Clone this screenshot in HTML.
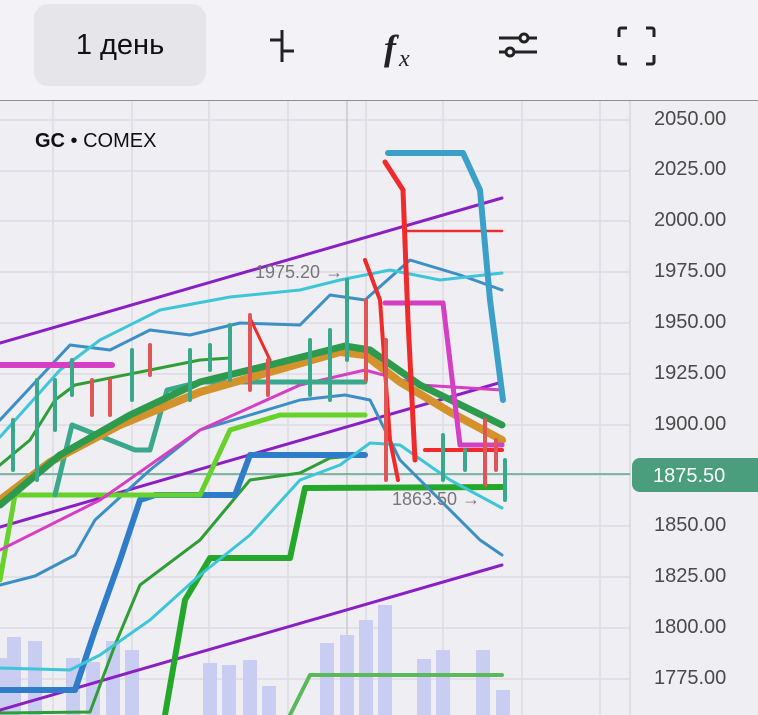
<!DOCTYPE html>
<html><head><meta charset="utf-8"><style>
html,body{margin:0;padding:0;width:758px;height:715px;overflow:hidden;background:#efeef3;font-family:"Liberation Sans",sans-serif}
.top{position:absolute;left:0;top:0;width:758px;height:100px;background:#f3f2f7;border-bottom:1.5px solid #8e8e93}
.btn{position:absolute;left:34px;top:4px;width:172px;height:82px;background:#e6e5ea;border-radius:14px;font-size:29px;color:#111;line-height:82px;text-align:center}
.lab{position:absolute;left:654px;font-size:20px;color:#4a4a4a}
</style></head><body>
<div class="top">
<div class="btn">1 день</div>
<svg width="758" height="100" style="position:absolute;left:0;top:0">
<g stroke="#222" stroke-width="3" fill="none">
<line x1="282" y1="30" x2="282" y2="62"/><line x1="270" y1="40" x2="282" y2="40"/><line x1="282" y1="51" x2="294" y2="51"/>
<line x1="499" y1="38" x2="537" y2="38"/><line x1="499" y1="52" x2="537" y2="52"/>
<circle cx="524" cy="38" r="4" fill="#f3f2f7"/><circle cx="510" cy="52" r="4" fill="#f3f2f7"/>
<path d="M619 37v-7a2 2 0 0 1 2-2h6M646 28h6a2 2 0 0 1 2 2v7M654 55v7a2 2 0 0 1-2 2h-6M627 64h-6a2 2 0 0 1-2-2v-7" stroke-width="3"/>
</g>
<text x="384" y="60" font-family="Liberation Serif" font-style="italic" font-weight="bold" font-size="36" fill="#222">f</text>
<text x="399" y="66" font-family="Liberation Serif" font-style="italic" font-size="24" fill="#222">x</text>
</svg>
</div>
<svg width="758" height="614" viewBox="0 101 758 614" style="position:absolute;left:0;top:101px">
<g stroke="#dddce2" stroke-width="1.5">
<line x1="53" y1="101" x2="53" y2="715"/><line x1="132" y1="101" x2="132" y2="715"/><line x1="209" y1="101" x2="209" y2="715"/><line x1="288" y1="101" x2="288" y2="715"/><line x1="366" y1="101" x2="366" y2="715"/><line x1="443" y1="101" x2="443" y2="715"/><line x1="522" y1="101" x2="522" y2="715"/><line x1="600" y1="101" x2="600" y2="715"/>
<line x1="0" y1="120" x2="630" y2="120"/><line x1="0" y1="171" x2="630" y2="171"/><line x1="0" y1="221" x2="630" y2="221"/><line x1="0" y1="272" x2="630" y2="272"/><line x1="0" y1="323" x2="630" y2="323"/><line x1="0" y1="374" x2="630" y2="374"/><line x1="0" y1="425" x2="630" y2="425"/><line x1="0" y1="475" x2="630" y2="475"/><line x1="0" y1="526" x2="630" y2="526"/><line x1="0" y1="577" x2="630" y2="577"/><line x1="0" y1="628" x2="630" y2="628"/><line x1="0" y1="679" x2="630" y2="679"/>
</g>
<line x1="347" y1="101" x2="347" y2="715" stroke="#c9c8ce" stroke-width="1.5"/>
<line x1="630" y1="101" x2="630" y2="715" stroke="#d6d5db" stroke-width="1.5"/>
<g fill="#c9cdf2">
<rect x="0" y="658" width="14" height="57"/><rect x="7" y="637" width="14" height="78"/><rect x="28" y="641" width="14" height="74"/><rect x="66" y="658" width="14" height="57"/><rect x="86" y="662" width="14" height="53"/><rect x="106" y="641" width="14" height="74"/><rect x="125" y="650" width="14" height="65"/><rect x="203" y="663" width="14" height="52"/><rect x="222" y="665" width="14" height="50"/><rect x="243" y="660" width="14" height="55"/><rect x="262" y="686" width="14" height="29"/><rect x="320" y="643" width="14" height="72"/><rect x="340" y="635" width="14" height="80"/><rect x="359" y="620" width="14" height="95"/><rect x="378" y="605" width="14" height="110"/><rect x="417" y="659" width="14" height="56"/><rect x="436" y="650" width="14" height="65"/><rect x="476" y="650" width="14" height="65"/><rect x="496" y="690" width="14" height="25"/>
</g>
<line x1="0" y1="474" x2="630" y2="474" stroke="#5aa88a" stroke-width="1.5"/>
<g fill="none" stroke-linejoin="round" stroke-linecap="round">
<polyline stroke="#8a1fc4" stroke-width="3" points="0,343 502,198"/>
<polyline stroke="#8a1fc4" stroke-width="3" points="0,527 502,382"/>
<polyline stroke="#8a1fc4" stroke-width="3" points="0,710 502,565"/>
<polyline stroke="#5cb85c" stroke-width="4" points="290,715 310,675 502,675"/>
<polyline stroke="#2f9e35" stroke-width="3" points="0,713 90,712 115,645 140,585 200,540 250,480 300,473 330,458 365,455"/>
<polyline stroke="#24a82a" stroke-width="6" points="165,715 185,600 210,558 290,558 305,488 502,487"/>
<polyline stroke="#2f7cc8" stroke-width="6" points="0,690 75,690 95,630 120,560 140,500 155,495 235,495 250,455 365,455"/>
<polyline stroke="#3cc6d8" stroke-width="3" points="0,668 70,670 100,655 150,620 200,575 250,535 300,480 340,465 370,443 400,445 450,480 502,508"/>
<polyline stroke="#3b8fc4" stroke-width="3" points="0,585 35,576 75,555 95,520 150,470 200,430 250,415 300,400 345,395 370,400 400,460 440,500 480,540 502,555"/>
<polyline stroke="#66d22a" stroke-width="5" points="0,580 15,495 200,495 230,430 280,415 365,415"/>
<polyline stroke="#d63ec4" stroke-width="3" points="0,550 100,500 200,430 300,385 365,370 420,385 502,390"/>
<polyline stroke="#3aa88a" stroke-width="5" points="55,495 72,425 135,450 150,450 167,390 200,382 365,382"/>
<polyline stroke="#3b8fc4" stroke-width="3" points="0,420 70,345 110,350 150,330 190,335 240,323 300,325 330,295 365,300 410,260 460,275 502,290"/>
<polyline stroke="#3cc6d8" stroke-width="3" points="0,437 60,370 100,340 160,310 230,297 300,290 340,280 390,270 440,280 502,273"/>
<polyline stroke="#d4922a" stroke-width="8" points="0,500 50,462 120,425 200,392 270,372 340,352 365,355 400,382 450,412 502,440"/>
<polyline stroke="#2e9a4e" stroke-width="7" points="0,505 60,455 130,415 200,382 270,365 345,346 370,350 420,385 502,425"/>
<polyline stroke="#2f9e35" stroke-width="3" points="0,465 30,440 55,400 75,385 150,370 200,360 230,358"/>
<polyline stroke="#d63ec4" stroke-width="5" points="385,303 443,303 460,445 502,445"/>
<polyline stroke="#d63ec4" stroke-width="6" points="0,365 112,365"/>
<polyline stroke="#e83030" stroke-width="2.5" points="407,231 502,231"/>
<polyline stroke="#f02a2a" stroke-width="5" points="385,162 403,190 408,320 415,460"/>
<polyline stroke="#f02a2a" stroke-width="4" points="365,260 380,300 390,440 398,480"/>
<polyline stroke="#f02a2a" stroke-width="4" points="425,450 502,450"/>
<polyline stroke="#f02a2a" stroke-width="3" points="250,318 270,360"/>
<polyline stroke="#3aa0c8" stroke-width="6" points="388,153 463,153 480,190 490,300 503,400"/>
<g stroke="#3aa88a" stroke-width="4">
<line x1="13" y1="420" x2="13" y2="470"/><line x1="37" y1="380" x2="37" y2="480"/><line x1="55" y1="380" x2="55" y2="430"/><line x1="72" y1="360" x2="72" y2="395"/><line x1="132" y1="350" x2="132" y2="400"/><line x1="190" y1="350" x2="190" y2="400"/><line x1="210" y1="345" x2="210" y2="370"/><line x1="230" y1="325" x2="230" y2="380"/><line x1="310" y1="340" x2="310" y2="395"/><line x1="330" y1="330" x2="330" y2="400"/><line x1="347" y1="280" x2="347" y2="360"/><line x1="443" y1="435" x2="443" y2="480"/><line x1="465" y1="450" x2="465" y2="470"/><line x1="505" y1="460" x2="505" y2="500"/>
</g>
<g stroke="#e05555" stroke-width="4">
<line x1="92" y1="380" x2="92" y2="415"/><line x1="110" y1="380" x2="110" y2="415"/><line x1="150" y1="345" x2="150" y2="375"/><line x1="250" y1="315" x2="250" y2="390"/><line x1="268" y1="360" x2="268" y2="395"/><line x1="366" y1="300" x2="366" y2="380"/><line x1="386" y1="340" x2="386" y2="480"/><line x1="485" y1="420" x2="485" y2="485"/><line x1="496" y1="440" x2="496" y2="470"/>
</g>
</g>
<text x="255" y="278" font-size="18" fill="#777" font-family="Liberation Sans">1975.20 →</text>
<text x="392" y="505" font-size="18" fill="#777" font-family="Liberation Sans">1863.50 →</text>
<text x="35" y="147" font-size="20" fill="#111" font-family="Liberation Sans"><tspan font-weight="bold">GC</tspan> • COMEX</text>
<path d="M640 458h118v34h-118a8 8 0 0 1-8-8v-18a8 8 0 0 1 8-8z" fill="#4a9e7e"/>
<text x="653" y="482" font-size="20" fill="#fff" font-family="Liberation Sans">1875.50</text>
</svg>
<div class="lab" style="top:108px">2050.00</div>
<div class="lab" style="top:158px">2025.00</div>
<div class="lab" style="top:209px">2000.00</div>
<div class="lab" style="top:260px">1975.00</div>
<div class="lab" style="top:311px">1950.00</div>
<div class="lab" style="top:362px">1925.00</div>
<div class="lab" style="top:413px">1900.00</div>
<div class="lab" style="top:514px">1850.00</div>
<div class="lab" style="top:565px">1825.00</div>
<div class="lab" style="top:616px">1800.00</div>
<div class="lab" style="top:667px">1775.00</div>
</body></html>
